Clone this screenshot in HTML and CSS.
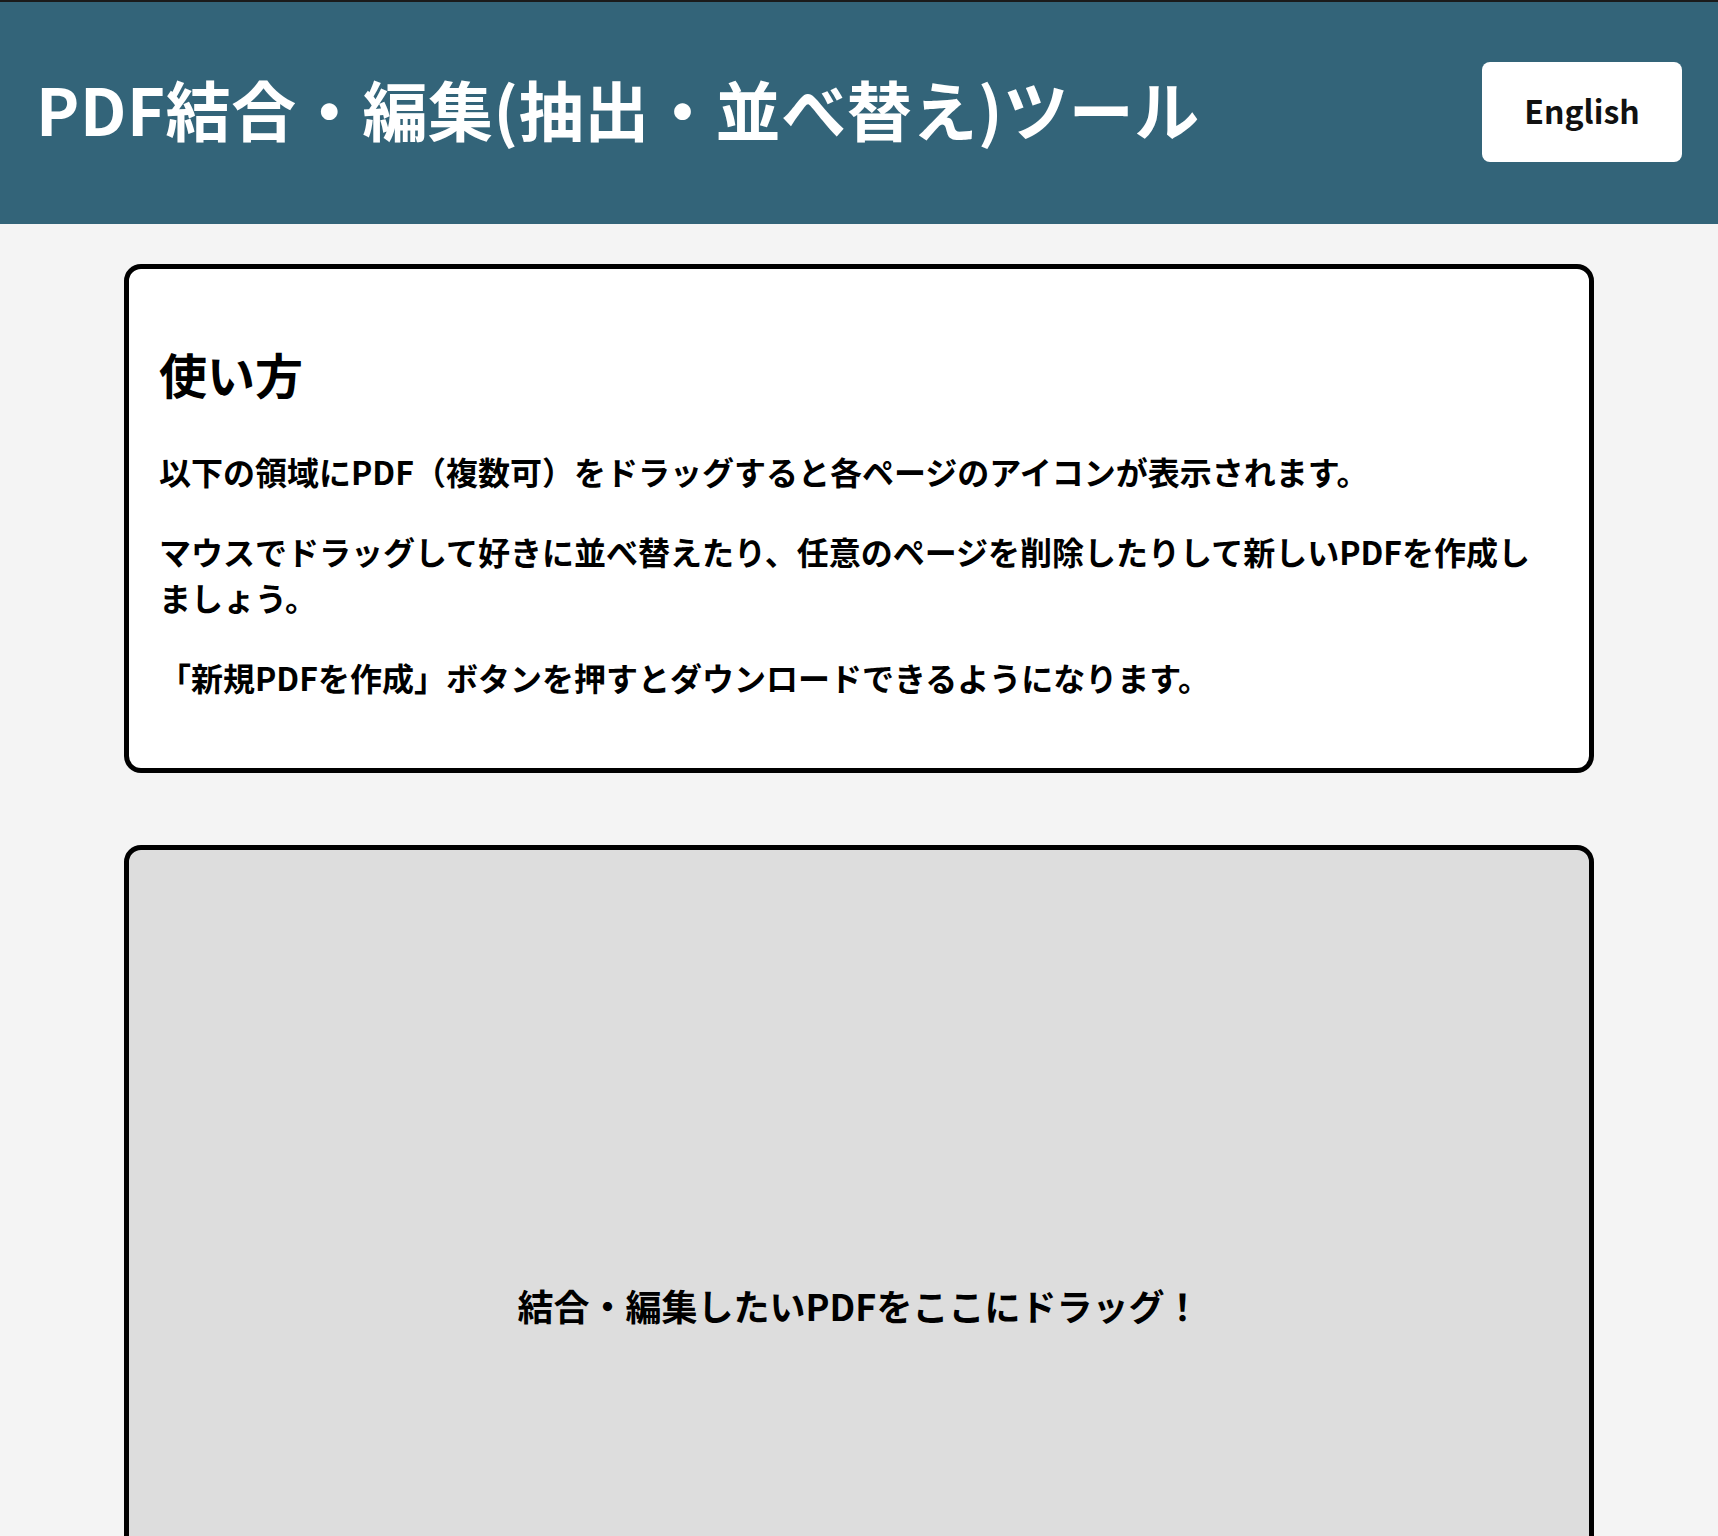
FILE: index.html
```html
<!DOCTYPE html>
<html lang="ja">
<head>
<meta charset="utf-8">
<title>PDF結合・編集(抽出・並べ替え)ツール</title>
<link rel="stylesheet" href="styles.css">
</head>
<body>
<header class="site-header">
  <h1 class="site-title">PDF結合・編集(抽出・並べ替え)ツール</h1>
  <button class="lang-button" type="button">English</button>
</header>
<main class="content">
  <section class="card usage">
    <h2 class="usage-title">使い方</h2>
    <p class="usage-text">以下の領域にPDF（複数可）をドラッグすると各ページのアイコンが表示されます。</p>
    <p class="usage-text">マウスでドラッグして好きに並べ替えたり、任意のページを削除したりして新しいPDFを作成しましょう。</p>
    <p class="usage-text">「新規PDFを作成」ボタンを押すとダウンロードできるようになります。</p>
  </section>
  <section class="card dropzone">
    <p class="drop-text">結合・編集したいPDFをここにドラッグ！</p>
  </section>
</main>
</body>
</html>
```

FILE: styles.css
```css
* {
  box-sizing: border-box;
}

html, body {
  margin: 0;
  padding: 0;
}

body {
  background: #f4f4f4;
  color: #000;
  font-family: "Noto Sans CJK JP", "Noto Sans", sans-serif;
  font-weight: 700;
}

.site-header {
  height: 224px;
  border-top: 2px solid #1b1b1b;
  background: #336479;
  display: flex;
  align-items: center;
  justify-content: space-between;
  padding: 0 36px 0 36px;
}

.site-title {
  margin: 0 0 10px;
  color: #fff;
  font-size: 65px;
  font-weight: 700;
  line-height: 1.2;
  letter-spacing: 0.6px;
}

.lang-button {
  width: 200px;
  height: 100px;
  border: none;
  border-radius: 8px;
  background: #fff;
  color: #111;
  font-family: "Noto Sans CJK JP", "Noto Sans", sans-serif;
  font-size: 32px;
  font-weight: 700;
  line-height: 1;
  padding: 0 0 4px;
  margin-bottom: 2px;
  cursor: pointer;
}

.content {
  padding: 40px 0 0;
  display: flex;
  flex-direction: column;
  align-items: center;
  gap: 72px;
}

.card {
  width: 1470px;
  border: 5px solid #000;
  border-radius: 17px;
}

.usage {
  background: #fff;
  padding: 30px 30px 34px;
}

.usage-title {
  margin: 39px 0 40px;
  font-size: 48px;
  font-weight: 700;
}

.usage-text {
  margin: 34px 0;
  font-size: 32px;
  font-weight: 700;
}

.usage-title + .usage-text {
  margin-top: 0;
}

.dropzone {
  background: #dddddd;
  height: 920px;
  display: flex;
  align-items: center;
  justify-content: center;
}

.drop-text {
  margin: 0;
  font-size: 36px;
  font-weight: 700;
}
```
